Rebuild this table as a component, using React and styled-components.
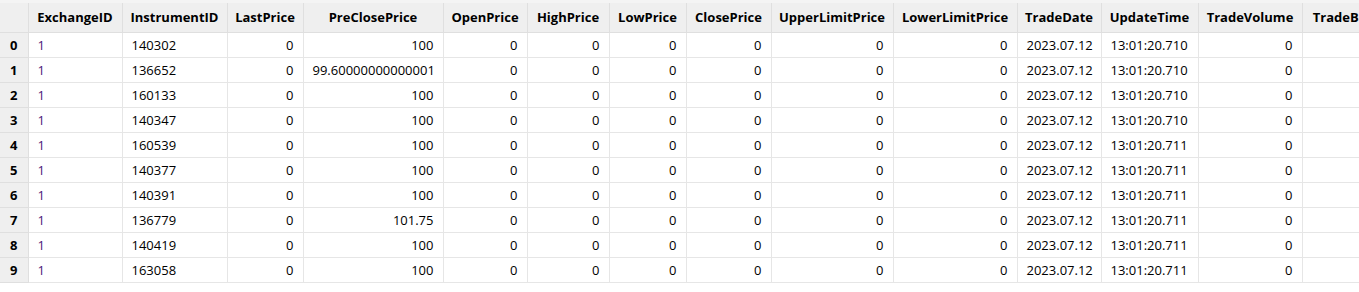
import React from "react";
import styled, { createGlobalStyle } from "styled-components";

const GlobalStyle = createGlobalStyle`
  html, body {
    margin: 0;
    padding: 0;
    background: #ffffff;
  }
  body {
    font-family: "Open Sans", "Noto Sans", sans-serif;
    font-size: 13px;
    color: #000000;
  }
`;

const columns = [
  { name: "ExchangeID", width: 94, align: "left", purple: true },
  { name: "InstrumentID", width: 105, align: "left" },
  { name: "LastPrice", width: 76, align: "right" },
  { name: "PreClosePrice", width: 140, align: "right" },
  { name: "OpenPrice", width: 84, align: "right" },
  { name: "HighPrice", width: 82, align: "right" },
  { name: "LowPrice", width: 77, align: "right" },
  { name: "ClosePrice", width: 85, align: "right" },
  { name: "UpperLimitPrice", width: 122, align: "right" },
  { name: "LowerLimitPrice", width: 124, align: "right" },
  { name: "TradeDate", width: 84, align: "left" },
  { name: "UpdateTime", width: 97, align: "left" },
  { name: "TradeVolume", width: 104, align: "right" },
  { name: "TradeBalance", width: 110, align: "right" },
];

const instruments = ["140302", "136652", "160133", "140347", "160539", "140377", "140391", "136779", "140419", "163058"];
const preClose = ["100", "99.60000000000001", "100", "100", "100", "100", "100", "101.75", "100", "100"];

const rows = instruments.map((id, i) => [
  "1",
  id,
  "0",
  preClose[i],
  "0",
  "0",
  "0",
  "0",
  "0",
  "0",
  "2023.07.12",
  i < 4 ? "13:01:20.710" : "13:01:20.711",
  "0",
  "",
]);

const Frame = styled.div`
  width: 1359px;
  height: 292px;
  overflow: hidden;
  background: #ffffff;
`;

const TopStrip = styled.div`
  height: 3px;
  background: #f4f4f4;
`;

const Table = styled.table`
  border-collapse: collapse;
  table-layout: fixed;
  width: ${({ $width }) => $width}px;
`;

const HeadCell = styled.th`
  height: 29px;
  padding: 0 6px;
  background: #efefef;
  border-right: 1px solid #dfdfdf;
  border-bottom: 1px solid #dfdfdf;
  font-weight: 700;
  text-align: center;
  white-space: nowrap;
  overflow: hidden;
  box-sizing: border-box;
`;

const IndexCell = styled.th`
  height: 24px;
  padding: 0;
  background: #efefef;
  border-right: 1px solid #dfdfdf;
  border-bottom: 1px solid #dfdfdf;
  font-weight: 700;
  text-align: center;
`;

const Cell = styled.td`
  height: 24px;
  padding: 0 9px;
  border-right: 1px solid #e6e6e6;
  border-bottom: 1px solid #e6e6e6;
  text-align: ${({ $align }) => $align};
  color: ${({ $purple }) => ($purple ? "#4b1a7a" : "#000000")};
  white-space: nowrap;
  overflow: hidden;
`;

export default function App() {
  const total = 28 + columns.reduce((s, c) => s + c.width, 0);
  return (
    <Frame>
      <GlobalStyle />
      <TopStrip />
      <Table $width={total}>
        <colgroup>
          <col style={{ width: 28 }} />
          {columns.map((c) => (
            <col key={c.name} style={{ width: c.width }} />
          ))}
        </colgroup>
        <thead>
          <tr>
            <HeadCell />
            {columns.map((c) => (
              <HeadCell key={c.name}>{c.name}</HeadCell>
            ))}
          </tr>
        </thead>
        <tbody>
          {rows.map((row, i) => (
            <tr key={i}>
              <IndexCell>{i}</IndexCell>
              {row.map((v, j) => (
                <Cell key={j} $align={columns[j].align} $purple={columns[j].purple}>
                  {v}
                </Cell>
              ))}
            </tr>
          ))}
        </tbody>
      </Table>
    </Frame>
  );
}
